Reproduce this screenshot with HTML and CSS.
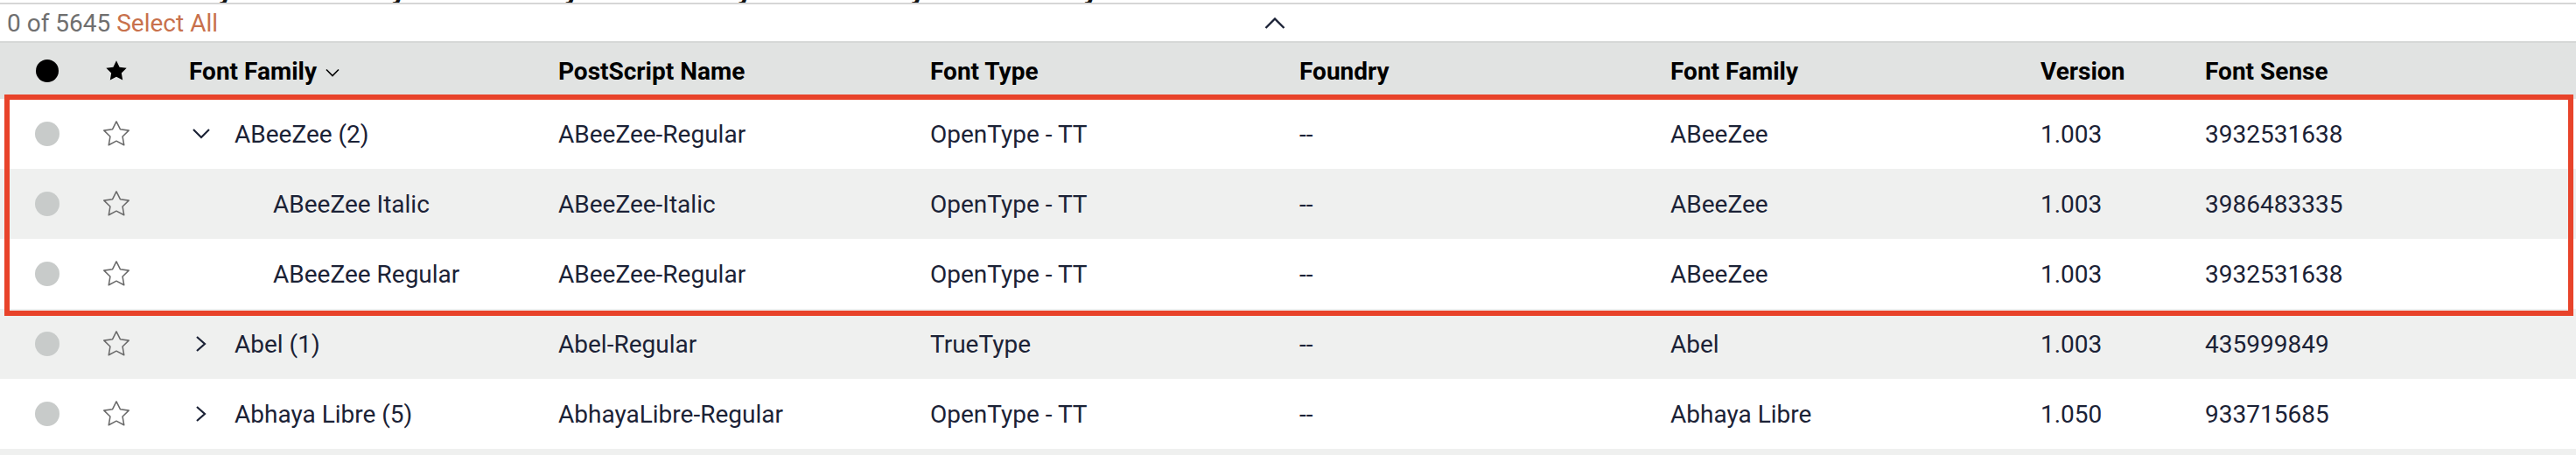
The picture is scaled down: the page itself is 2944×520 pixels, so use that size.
FILE: index.html
```html
<!DOCTYPE html>
<html lang="en">
<head>
<meta charset="utf-8">
<title>Fonts</title>
<link rel="stylesheet" href="styles.css">
</head>
<body>
<div class="page">
  <div class="cutoff"><div class="cutoff-text">Font family font family font family font family font family font family</div></div>
  <div class="toolbar">
    <div class="count"><span class="muted">0 of 5645</span> <span class="select-all">Select All</span></div>
    <svg class="caret-up" width="24" height="13" viewBox="0 0 24 13"><polyline points="1.5,12 12,1.5 22.5,12" fill="none" stroke="#1b2236" stroke-width="2.4"/></svg>
  </div>

  <div class="table">
    <div class="row head">
      <div class="cell center"><span class="dot dot-black"></span></div>
      <div class="cell center"><svg class="star" width="28" height="28" viewBox="0 0 24 24"><polygon points="12,2 15.09,8.26 22,9.27 17,14.14 18.18,21.02 12,17.77 5.82,21.02 7,14.14 2,9.27 8.91,8.26" fill="#000"/></svg></div>
      <div class="cell family">Font Family <svg class="sort" width="16" height="10" viewBox="0 0 16 10"><polyline points="1,1.5 8,8.5 15,1.5" fill="none" stroke="#000" stroke-width="1.6"/></svg></div>
      <div class="cell">PostScript Name</div>
      <div class="cell">Font Type</div>
      <div class="cell">Foundry</div>
      <div class="cell">Font Family</div>
      <div class="cell">Version</div>
      <div class="cell">Font Sense</div>
    </div>

    <div class="row">
      <div class="cell center"><span class="dot"></span></div>
      <div class="cell center"><svg class="star" width="34" height="34" viewBox="0 0 24 24"><polygon points="12,2 15.09,8.26 22,9.27 17,14.14 18.18,21.02 12,17.77 5.82,21.02 7,14.14 2,9.27 8.91,8.26" fill="none" stroke="#6b6b6b" stroke-width="1.1" stroke-linejoin="round"/></svg></div>
      <div class="cell family"><svg class="chev" width="24" height="14" viewBox="0 0 24 14"><polyline points="3,2 12,11 21,2" fill="none" stroke="#1b2236" stroke-width="2.2"/></svg><span>ABeeZee (2)</span></div>
      <div class="cell">ABeeZee-Regular</div>
      <div class="cell">OpenType - TT</div>
      <div class="cell">--</div>
      <div class="cell">ABeeZee</div>
      <div class="cell">1.003</div>
      <div class="cell">3932531638</div>
    </div>

    <div class="row alt">
      <div class="cell center"><span class="dot"></span></div>
      <div class="cell center"><svg class="star" width="34" height="34" viewBox="0 0 24 24"><polygon points="12,2 15.09,8.26 22,9.27 17,14.14 18.18,21.02 12,17.77 5.82,21.02 7,14.14 2,9.27 8.91,8.26" fill="none" stroke="#6b6b6b" stroke-width="1.1" stroke-linejoin="round"/></svg></div>
      <div class="cell family child">ABeeZee Italic</div>
      <div class="cell">ABeeZee-Italic</div>
      <div class="cell">OpenType - TT</div>
      <div class="cell">--</div>
      <div class="cell">ABeeZee</div>
      <div class="cell">1.003</div>
      <div class="cell">3986483335</div>
    </div>

    <div class="row">
      <div class="cell center"><span class="dot"></span></div>
      <div class="cell center"><svg class="star" width="34" height="34" viewBox="0 0 24 24"><polygon points="12,2 15.09,8.26 22,9.27 17,14.14 18.18,21.02 12,17.77 5.82,21.02 7,14.14 2,9.27 8.91,8.26" fill="none" stroke="#6b6b6b" stroke-width="1.1" stroke-linejoin="round"/></svg></div>
      <div class="cell family child">ABeeZee Regular</div>
      <div class="cell">ABeeZee-Regular</div>
      <div class="cell">OpenType - TT</div>
      <div class="cell">--</div>
      <div class="cell">ABeeZee</div>
      <div class="cell">1.003</div>
      <div class="cell">3932531638</div>
    </div>

    <div class="row alt">
      <div class="cell center"><span class="dot"></span></div>
      <div class="cell center"><svg class="star" width="34" height="34" viewBox="0 0 24 24"><polygon points="12,2 15.09,8.26 22,9.27 17,14.14 18.18,21.02 12,17.77 5.82,21.02 7,14.14 2,9.27 8.91,8.26" fill="none" stroke="#6b6b6b" stroke-width="1.1" stroke-linejoin="round"/></svg></div>
      <div class="cell family"><svg class="chev" width="24" height="20" viewBox="0 0 24 20"><polyline points="7,2 16,10 7,18" fill="none" stroke="#1b2236" stroke-width="2.2"/></svg><span>Abel (1)</span></div>
      <div class="cell">Abel-Regular</div>
      <div class="cell">TrueType</div>
      <div class="cell">--</div>
      <div class="cell">Abel</div>
      <div class="cell">1.003</div>
      <div class="cell">435999849</div>
    </div>

    <div class="row">
      <div class="cell center"><span class="dot"></span></div>
      <div class="cell center"><svg class="star" width="34" height="34" viewBox="0 0 24 24"><polygon points="12,2 15.09,8.26 22,9.27 17,14.14 18.18,21.02 12,17.77 5.82,21.02 7,14.14 2,9.27 8.91,8.26" fill="none" stroke="#6b6b6b" stroke-width="1.1" stroke-linejoin="round"/></svg></div>
      <div class="cell family"><svg class="chev" width="24" height="20" viewBox="0 0 24 20"><polyline points="7,2 16,10 7,18" fill="none" stroke="#1b2236" stroke-width="2.2"/></svg><span>Abhaya Libre (5)</span></div>
      <div class="cell">AbhayaLibre-Regular</div>
      <div class="cell">OpenType - TT</div>
      <div class="cell">--</div>
      <div class="cell">Abhaya Libre</div>
      <div class="cell">1.050</div>
      <div class="cell">933715685</div>
    </div>

    <div class="row alt tail"></div>

    <div class="highlight"></div>
  </div>
</div>
</body>
</html>
```

FILE: styles.css
```css
html, body {
  margin: 0;
  padding: 0;
  background: #fff;
}

body {
  font-family: Roboto, "Liberation Sans", sans-serif;
  color: #1b2236;
  width: 2944px;
  height: 520px;
  overflow: hidden;
}

.page {
  display: flex;
  flex-direction: column;
}

.cutoff {
  height: 3px;
  overflow: hidden;
  border-bottom: 2px solid #d6d6d6;
  padding-left: 75px;
}

.cutoff-text {
  margin-top: -30px;
  font-size: 34px;
  line-height: 34px;
  font-weight: 700;
  color: #111;
  letter-spacing: 2px;
}

.toolbar {
  height: 42px;
  display: flex;
  align-items: center;
  border-bottom: 2px solid #d6d8d7;
}

.count {
  padding-left: 8px;
  font-size: 28px;
  line-height: 28px;
  margin-top: 2px;
}

.muted {
  color: #6f6f6f;
}

.select-all {
  color: #c8714c;
}

.caret-up {
  margin-left: 1196px;
}

.table {
  position: relative;
  display: flex;
  flex-direction: column;
}

.row {
  display: grid;
  grid-template-columns: 108px 50px 480px 425px 422px 424px 423px 188px 1fr;
  height: 80px;
  align-items: center;
  font-size: 28px;
  background: #fff;
}

.row.alt {
  background: #eff0ef;
}

.row.tail {
  height: 7px;
}

.row.head {
  height: 64px;
  background: #e1e3e2;
  font-weight: 700;
  font-size: 28px;
  color: #000;
}

.cell {
  display: flex;
  align-items: center;
  white-space: nowrap;
}

.cell.center {
  justify-content: center;
}

.cell.family {
  padding-left: 58px;
}

.cell.family.child {
  padding-left: 154px;
}

.chev {
  margin-left: 2px;
  margin-right: 26px;
}

.sort {
  margin-left: 10px;
  margin-top: 4px;
}

.dot {
  width: 28px;
  height: 28px;
  border-radius: 50%;
  background: #c8cbca;
  display: block;
}

.dot-black {
  width: 26px;
  height: 26px;
  background: #000;
  margin-left: -1px;
}

.star {
  display: block;
}

.highlight {
  position: absolute;
  left: 5px;
  top: 59px;
  width: 2924px;
  height: 241px;
  border: 6px solid #e8432a;
  pointer-events: none;
}
```
